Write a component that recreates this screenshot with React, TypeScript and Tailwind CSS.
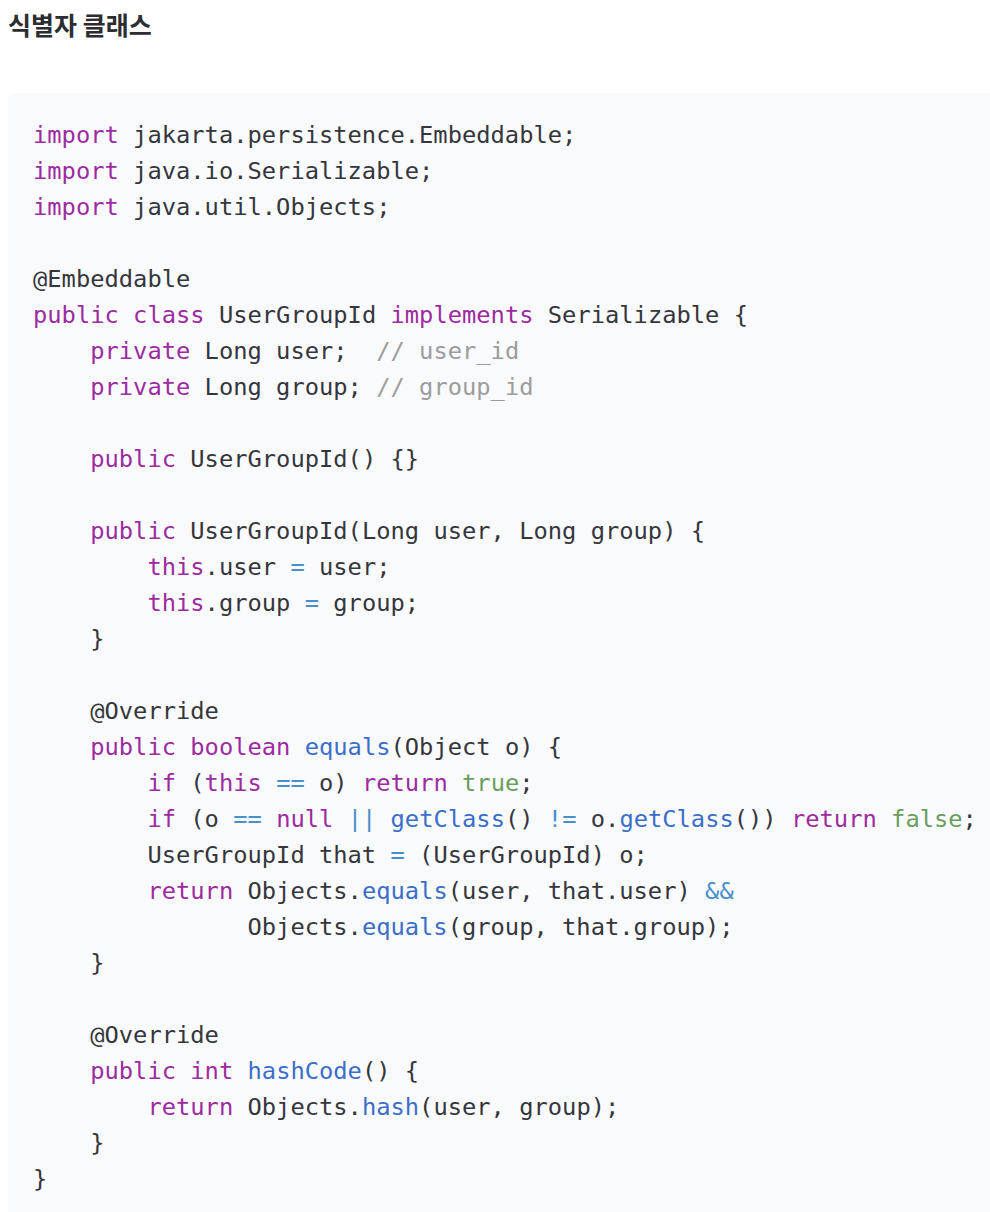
type Tok = [string, string?];

const K = "text-[#9d2ba0]"; // keyword
const F = "text-[#3b6ec9]"; // function
const O = "text-[#4a8fc9]"; // operator
const L = "text-[#6a9e5c]"; // literal
const C = "text-[#9c9c9c]"; // comment

const code: Tok[][] = [
  [["import", K], [" jakarta.persistence.Embeddable;"]],
  [["import", K], [" java.io.Serializable;"]],
  [["import", K], [" java.util.Objects;"]],
  [],
  [["@Embeddable"]],
  [["public", K], [" "], ["class", K], [" UserGroupId "], ["implements", K], [" Serializable {"]],
  [["    "], ["private", K], [" Long user;  "], ["// user_id", C]],
  [["    "], ["private", K], [" Long group; "], ["// group_id", C]],
  [],
  [["    "], ["public", K], [" UserGroupId() {}"]],
  [],
  [["    "], ["public", K], [" UserGroupId(Long user, Long group) {"]],
  [["        "], ["this", K], [".user "], ["=", O], [" user;"]],
  [["        "], ["this", K], [".group "], ["=", O], [" group;"]],
  [["    }"]],
  [],
  [["    @Override"]],
  [["    "], ["public", K], [" "], ["boolean", K], [" "], ["equals", F], ["(Object o) {"]],
  [["        "], ["if", K], [" ("], ["this", K], [" "], ["==", O], [" o) "], ["return", K], [" "], ["true", L], [";"]],
  [
    ["        "], ["if", K], [" (o "], ["==", O], [" "], ["null", K], [" "], ["||", O], [" "], ["getClass", F],
    ["() "], ["!=", O], [" o."], ["getClass", F], ["()) "], ["return", K], [" "], ["false", L], [";"],
  ],
  [["        UserGroupId that "], ["=", O], [" (UserGroupId) o;"]],
  [["        "], ["return", K], [" Objects."], ["equals", F], ["(user, that.user) "], ["&&", O]],
  [["               Objects."], ["equals", F], ["(group, that.group);"]],
  [["    }"]],
  [],
  [["    @Override"]],
  [["    "], ["public", K], [" "], ["int", K], [" "], ["hashCode", F], ["() {"]],
  [["        "], ["return", K], [" Objects."], ["hash", F], ["(user, group);"]],
  [["    }"]],
  [["}"]],
];

export default function App() {
  return (
    <div className="min-h-screen bg-white pl-2 overflow-hidden">
      <h3 className="pt-[6px] text-[25px] leading-[36px] font-bold text-[#2b2d31] font-['Noto_Sans_CJK_KR','Noto_Sans',sans-serif]">
        식별자 클래스
      </h3>
      <pre className="mt-[51px] w-[990px] rounded-md bg-[#f9fafc] pl-[25px] pt-[24px] pb-6 text-[23.75px] leading-[36px] text-[#35363c] font-['DejaVu_Sans_Mono',monospace]">
        {code.map((line, i) => (
          <div key={i} className="h-9 whitespace-pre">
            {line.map(([t, cls], j) => (
              <span key={j} className={cls}>
                {t}
              </span>
            ))}
          </div>
        ))}
      </pre>
    </div>
  );
}
